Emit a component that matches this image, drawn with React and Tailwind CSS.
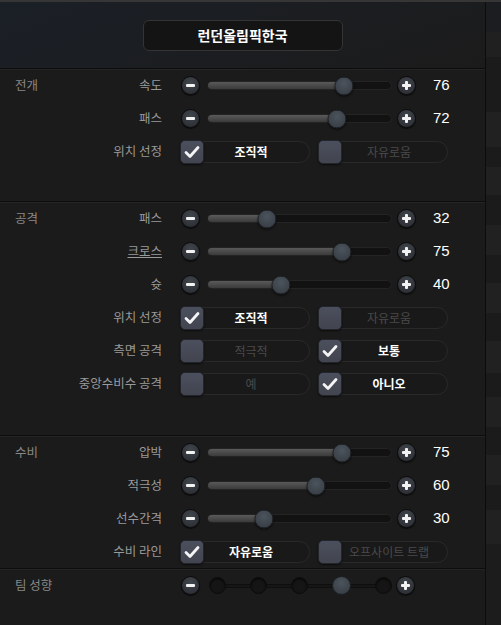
import React from "react";

const font = { fontFamily: '"Noto Sans CJK KR", "Noto Sans", sans-serif' };

function RoundBtn({ kind, className = "" }) {
  return (
    <div
      className={`flex h-[19px] w-[19px] shrink-0 items-center justify-center rounded-full border border-[#0c0c0c] bg-[radial-gradient(circle_at_50%_35%,#41464d,#272a2f)] shadow-[0_1px_1px_rgba(0,0,0,0.6)] ${className}`}
    >
      <svg width="11" height="11" viewBox="0 0 11 11">
        <rect x="1" y="4" width="9" height="3" rx="1" fill="#f2f2f2" />
        {kind === "plus" && (
          <rect x="4" y="1" width="3" height="9" rx="1" fill="#f2f2f2" />
        )}
      </svg>
    </div>
  );
}

function Slider({ value }) {
  const pos = 3 + value * 1.75;
  return (
    <div className="flex items-center">
      <RoundBtn kind="minus" />
      <div className="relative ml-[7px] h-[9px] w-[185px] rounded-full border border-[#242424] bg-[#121212]">
        <div
          className="h-full rounded-full bg-gradient-to-b from-[#5a5a5a] to-[#3b3b3b]"
          style={{ width: pos }}
        />
        <div
          className="absolute top-1/2 h-[19px] w-[19px] -translate-x-1/2 -translate-y-1/2 rounded-full border border-[#1e2226] bg-[radial-gradient(circle_at_50%_35%,#4b535c,#343a41)] shadow-[0_1px_2px_rgba(0,0,0,0.7)]"
          style={{ left: pos }}
        />
      </div>
      <RoundBtn kind="plus" className="ml-[5px]" />
      <span
        className="ml-[17px] text-[15px] font-medium text-white"
        style={{ fontFamily: '"Liberation Sans", Arial, sans-serif' }}
      >
        {value}
      </span>
    </div>
  );
}

function Box({ checked }) {
  return (
    <div className="absolute left-[-3px] top-1/2 flex h-[24px] w-[24px] -translate-y-1/2 items-center justify-center rounded-[5px] border border-[#23252c] bg-gradient-to-b from-[#50546380] to-[#42454f] bg-[#474a57] shadow-[0_1px_2px_rgba(0,0,0,0.6)]">
      {checked && (
        <svg width="16" height="14" viewBox="0 0 16 14">
          <path
            d="M2 7.5 L6 11.5 L14 2.5"
            fill="none"
            stroke="#f4f4f4"
            strokeWidth="2.8"
            strokeLinecap="round"
            strokeLinejoin="round"
          />
        </svg>
      )}
    </div>
  );
}

function Opt({ label, checked, className = "" }) {
  return (
    <div
      className={`relative flex h-[22px] w-[128px] items-center justify-center rounded-full border border-[#292929] bg-[#191919] pl-[10px] ${className}`}
    >
      <Box checked={checked} />
      <span
        className={`text-[12px] ${
          checked ? "font-bold text-white" : "text-[#4a4a4a]"
        }`}
      >
        {label}
      </span>
    </div>
  );
}

function Choice({ a, b, pick }) {
  return (
    <div className="flex items-center">
      <Opt label={a} checked={pick === 0} className="ml-[1px]" />
      <Opt label={b} checked={pick === 1} className="ml-[10px]" />
    </div>
  );
}

function Steps({ step }) {
  return (
    <div className="flex items-center">
      <RoundBtn kind="minus" />
      <div className="relative ml-[9px] flex h-[19px] w-[183px] items-center justify-between">
        <div className="absolute left-[8px] right-[8px] top-1/2 h-[4px] -translate-y-1/2 rounded-full border border-[#0e0e0e] bg-[#161616]" />
        {[0, 1, 2, 3, 4].map((i) =>
          i === step ? (
            <div
              key={i}
              className="relative h-[19px] w-[19px] rounded-full border border-[#1e2226] bg-[radial-gradient(circle_at_50%_35%,#4b535c,#343a41)]"
            />
          ) : (
            <div
              key={i}
              className="relative h-[17px] w-[17px] rounded-full border border-[#0c0c0c] bg-[#151515] shadow-[inset_0_1px_2px_rgba(0,0,0,0.8)]"
            />
          )
        )}
      </div>
      <RoundBtn kind="plus" className="ml-[4px]" />
    </div>
  );
}

function Row({ section, label, underline, children }) {
  return (
    <div className="flex h-[33px] items-center">
      <div className="flex w-[162px] items-center justify-between pl-[15px] text-[12.5px]">
        <span className="text-[#888888]">{section}</span>
        <span className={`text-[#999999] ${underline ? "underline" : ""}`}>
          {label}
        </span>
      </div>
      <div className="ml-[19px]">{children}</div>
    </div>
  );
}

function Section({ className = "", children }) {
  return (
    <div
      className={`border-t border-[#0d0d0d] shadow-[inset_0_1px_0_#242424] ${className}`}
    >
      {children}
    </div>
  );
}

const bands = [
  [30, "#1c1d20"],
  [25, "#202020"],
  [55, "#1b1b1b"],
  [35, "#212121"],
  [20, "#1b1b1b"],
  [28, "#212121"],
  [30, "#1b1b1b"],
  [30, "#212121"],
  [28, "#1b1b1b"],
  [30, "#212121"],
  [28, "#1b1b1b"],
  [32, "#212121"],
  [24, "#1b1b1b"],
  [30, "#212121"],
  [28, "#1b1b1b"],
  [30, "#212121"],
  [25, "#1b1b1b"],
  [34, "#212121"],
];

export default function App() {
  return (
    <div
      className="flex h-[625px] w-[501px] overflow-hidden border-t-2 border-[#363636] bg-[#1b1b1b]"
      style={font}
    >
      <div className="flex w-[485px] flex-col bg-[linear-gradient(160deg,#1b2027_0%,#1b1b1b_30%)]">
        <div className="flex h-[66px] justify-center pt-[18px]">
          <div className="flex h-[31px] w-[200px] items-center justify-center rounded-[6px] border border-[#343434] bg-[#141414] text-[14px] font-bold text-white">
            런던올림픽한국
          </div>
        </div>

        <Section className="h-[133px] bg-[#1b1b1b]">
          <Row section="전개" label="속도">
            <Slider value={76} />
          </Row>
          <Row label="패스">
            <Slider value={72} />
          </Row>
          <Row label="위치 선정">
            <Choice a="조직적" b="자유로움" pick={0} />
          </Row>
        </Section>

        <Section className="h-[234px] bg-[#1b1b1b]">
          <Row section="공격" label="패스">
            <Slider value={32} />
          </Row>
          <Row label="크로스" underline>
            <Slider value={75} />
          </Row>
          <Row label="슛">
            <Slider value={40} />
          </Row>
          <Row label="위치 선정">
            <Choice a="조직적" b="자유로움" pick={0} />
          </Row>
          <Row label="측면 공격">
            <Choice a="적극적" b="보통" pick={1} />
          </Row>
          <Row label="중앙수비수 공격">
            <Choice a="예" b="아니오" pick={1} />
          </Row>
        </Section>

        <Section className="h-[133px] bg-[#1b1b1b]">
          <Row section="수비" label="압박">
            <Slider value={75} />
          </Row>
          <Row label="적극성">
            <Slider value={60} />
          </Row>
          <Row label="선수간격">
            <Slider value={30} />
          </Row>
          <Row label="수비 라인">
            <Choice a="자유로움" b="오프사이트 트랩" pick={0} />
          </Row>
        </Section>

        <Section className="flex-1 bg-[#1b1b1b]">
          <Row section="팀 성향">
            <Steps step={3} />
          </Row>
        </Section>
      </div>
      <div className="flex flex-1 flex-col border-l border-[#0c0c0c] bg-[#1c1c1c]">
        {bands.map(([h, c], i) => (
          <div key={i} style={{ height: h, background: c }} />
        ))}
      </div>
    </div>
  );
}
